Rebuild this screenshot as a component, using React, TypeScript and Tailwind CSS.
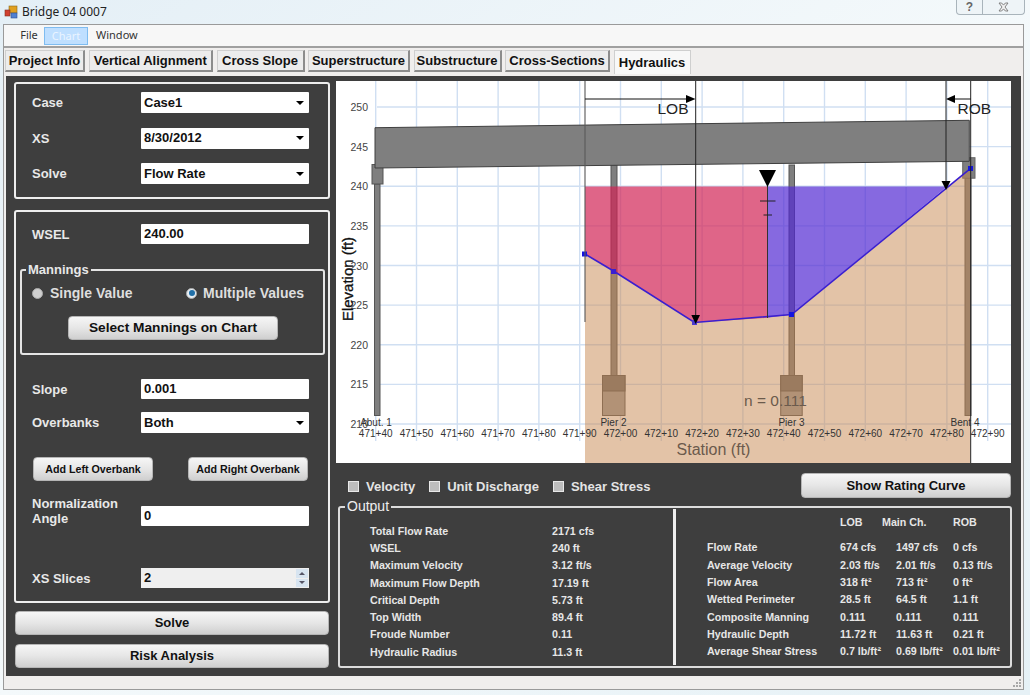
import React from "react";

const xTicks = ["471+40","471+50","471+60","471+70","471+80","471+90","472+00","472+10","472+20","472+30","472+40","472+50","472+60","472+70","472+80","472+90"];
const yTicks = [250,245,240,235,230,225,220,215,210];
const gx = (i: number) => 375.7 + 40.8 * i;
const gy = (i: number) => 107 + 39.63 * i;
const ground = "585,254 613.5,271 694.5,322.5 791.7,314.5 970.3,168.7";

function Footing({ x, w }: { x: number; w: number }) {
  return (
    <>
      <rect x={x} y={375.5} width={w} height={40} fill="#9c9c9c" stroke="#555" />
      <rect x={x} y={375.5} width={w} height={15.5} fill="#6e6e6e" stroke="#555" />
    </>
  );
}

function Chart() {
  const font = "'Liberation Sans', Arial, sans-serif";
  return (
    <svg viewBox="336 81 675 382" className="block w-[675px] h-[382px] bg-white" style={{ fontFamily: font }}>
      {xTicks.map((_, i) => (
        <line key={i} x1={gx(i)} x2={gx(i)} y1={81} y2={441} stroke="#d0dff2" strokeWidth={1.4} />
      ))}
      {yTicks.map((_, i) => (
        <line key={i} x1={377} x2={1011} y1={gy(i)} y2={gy(i)} stroke="#d0dff2" strokeWidth={1.4} />
      ))}
      {/* Abutment 1 */}
      <rect x={374.5} y={184} width={5.5} height={231.5} fill="#7f7f7f" stroke="#555" />
      <rect x={372} y={164.5} width={11} height={19.5} fill="#7f7f7f" stroke="#555" />
      {/* Pier 2 */}
      <rect x={611} y={165} width={6} height={210.5} fill="#7f7f7f" stroke="#555" />
      <Footing x={602.5} w={22.5} />
      {/* Pier 3 */}
      <rect x={789} y={165} width={5.5} height={210.5} fill="#7f7f7f" stroke="#555" />
      <Footing x={780.7} w={21.5} />
      {/* Bent 4 */}
      <rect x={965} y={178} width={6} height={237.5} fill="#7f7f7f" stroke="#555" />
      <rect x={962.7} y={157.7} width={12.3} height={20.5} fill="#7f7f7f" stroke="#666" />
      {/* Ground and water */}
      <polygon points={`585,463 ${ground} 970.3,463`} fill="#c88850" fillOpacity={0.5} />
      <polygon points="585,186.5 767.5,186.5 767.5,317.8 694.5,322.5 613.5,271 585,254" fill="#d12455" fillOpacity={0.7} />
      <polygon points="767.5,186.5 947,186.5 791.7,314.5 767.5,317.8" fill="#5229d3" fillOpacity={0.7} />
      {/* Deck */}
      <polygon points="375,127.7 969.3,120.3 969.3,161.3 375,168" fill="#7f7f7f" stroke="#3f3f3f" strokeWidth={1} />
      {/* Ground line */}
      <polyline points={ground} fill="none" stroke="#3a1fd0" strokeWidth={1.6} />
      <rect x={582} y={251.5} width={5} height={5} fill="#1414e0" />
      <rect x={611} y={269} width={5} height={5} fill="#3a1fd0" />
      <rect x={692} y={320} width={5} height={5} fill="#4a3ad0" />
      <rect x={789} y={312} width={5} height={5} fill="#1414e0" />
      <rect x={968} y={166} width={5} height={5} fill="#1414e0" />
      {/* LOB / ROB markers */}
      <line x1={585} x2={585} y1={81} y2={322} stroke="#5a5a5a" strokeOpacity={0.7} strokeWidth={1.6} />
      <line x1={585} x2={690} y1={99} y2={99} stroke="#111" strokeWidth={1} />
      <polygon points="695.5,99 686,95 686,103" fill="#000" />
      <line x1={695.7} x2={695.7} y1={81} y2={316} stroke="#222" strokeWidth={1} />
      <polygon points="695.7,324 691.3,315 700,315" fill="#000" />
      <line x1={970.7} x2={970.7} y1={81} y2={463} stroke="#222" strokeWidth={1} />
      <line x1={951} x2={970.7} y1={99} y2={99} stroke="#111" strokeWidth={1} />
      <polygon points="946,99 955,95 955,103" fill="#000" />
      <line x1={946} x2={946} y1={81} y2={182} stroke="#222" strokeWidth={1} />
      <polygon points="946,190 941.5,181 950.5,181" fill="#000" />
      <text x={657.5} y={114} fontSize={15.5} fill="#222">LOB</text>
      <text x={957.5} y={114} fontSize={15.5} fill="#222">ROB</text>
      {/* Water surface symbol */}
      <line x1={767.5} x2={767.5} y1={186} y2={318} stroke="#333" strokeWidth={1} />
      <polygon points="759,170 776,170 767.5,187" fill="#000" />
      <line x1={760} x2={775.5} y1={201} y2={201} stroke="#222" strokeWidth={1} />
      <line x1={763.5} x2={772} y1={215} y2={215} stroke="#222" strokeWidth={1} />
      {/* Labels */}
      {yTicks.map((t, i) => (
        <text key={t} x={368} y={gy(i) + 4} fontSize={10.5} fill="#444" textAnchor="end">{t}</text>
      ))}
      {xTicks.map((t, i) => (
        <text key={t} x={gx(i)} y={436.5} fontSize={10} fill="#333" textAnchor="middle">{t}</text>
      ))}
      <text x={376} y={426} fontSize={10} fill="#333" textAnchor="middle">Abut. 1</text>
      <text x={613.5} y={426} fontSize={10} fill="#333" textAnchor="middle">Pier 2</text>
      <text x={791.5} y={426} fontSize={10} fill="#333" textAnchor="middle">Pier 3</text>
      <text x={965} y={426} fontSize={10} fill="#333" textAnchor="middle">Bent 4</text>
      <text x={744} y={406} fontSize={15.5} fill="#6b5a4c">n = 0.111</text>
      <text x={713.5} y={455} fontSize={16} fill="#6b5a4c" textAnchor="middle">Station (ft)</text>
      <text transform="translate(352.5 279) rotate(-90)" fontSize={15} fill="#111" stroke="#111" strokeWidth={0.3} textAnchor="middle">Elevation (ft)</text>
    </svg>
  );
}

function Btn({ children, className }: { children: React.ReactNode; className: string }) {
  return (
    <div className={"flex items-center justify-center rounded-sm border border-[#b5b5b5] bg-gradient-to-b from-[#f6f6f6] via-[#e6e6e6] to-[#cfcfcf] font-bold text-[#111] " + className}>
      {children}
    </div>
  );
}

function Caret() {
  return <span className="w-0 h-0 border-x-[4px] border-x-transparent border-t-[4px] border-t-black" />;
}

function Field({ children, caret, className }: { children: React.ReactNode; caret?: boolean; className?: string }) {
  return (
    <div className={"flex items-center justify-between w-[168px] bg-white rounded-[1px] pl-[3px] pr-[5px] font-bold text-[13px] text-[#111] " + (className ?? "h-[21px]")}>
      <span>{children}</span>
      {caret && <Caret />}
    </div>
  );
}

function Row({ label, children, className }: { label: React.ReactNode; children: React.ReactNode; className?: string }) {
  return (
    <div className={"flex items-center " + (className ?? "")}>
      <div className="w-[109px] font-bold text-[13px] text-[#e8e8e8] leading-[15px]">{label}</div>
      {children}
    </div>
  );
}

function Radio({ on }: { on?: boolean }) {
  return (
    <span className={"w-[11px] h-[11px] rounded-full border border-[#aaa] flex items-center justify-center " + (on ? "bg-[#e6eef4]" : "bg-[#cfcfcf]")}>
      {on && <span className="w-[6px] h-[6px] rounded-full bg-[#1f6fa8]" />}
    </span>
  );
}

function Check({ label }: { label: string }) {
  return (
    <div className="flex items-center gap-[7px] font-bold text-[13px] text-[#e4e4e4]">
      <span className="w-[11px] h-[11px] bg-[#bdbdbd] border border-[#e8e8e8]" />
      <span>{label}</span>
    </div>
  );
}

const outL: [string, string][] = [
  ["Total Flow Rate", "2171 cfs"],
  ["WSEL", "240 ft"],
  ["Maximum Velocity", "3.12 ft/s"],
  ["Maximum Flow Depth", "17.19 ft"],
  ["Critical Depth", "5.73 ft"],
  ["Top Width", "89.4 ft"],
  ["Froude Number", "0.11"],
  ["Hydraulic Radius", "11.3 ft"],
];
const outR: string[][] = [
  ["Flow Rate", "674 cfs", "1497 cfs", "0 cfs"],
  ["Average Velocity", "2.03 ft/s", "2.01 ft/s", "0.13 ft/s"],
  ["Flow Area", "318 ft²", "713 ft²", "0 ft²"],
  ["Wetted Perimeter", "28.5 ft", "64.5 ft", "1.1 ft"],
  ["Composite Manning", "0.111", "0.111", "0.111"],
  ["Hydraulic Depth", "11.72 ft", "11.63 ft", "0.21 ft"],
  ["Average Shear Stress", "0.7 lb/ft²", "0.69 lb/ft²", "0.01 lb/ft²"],
];

const tabs: [string, string][] = [
  ["Project Info", "w-[80px]"],
  ["Vertical Alignment", "w-[124.5px]"],
  ["Cross Slope", "w-[88px]"],
  ["Superstructure", "w-[102px]"],
  ["Substructure", "w-[88px]"],
  ["Cross-Sections", "w-[105px]"],
];

export default function App() {
  return (
    <div className="w-[1030px] h-[695px] overflow-hidden relative bg-gradient-to-br from-[#e4eff6] via-[#f4f9fb] to-[#e6f1f6] text-[#111]" style={{ fontFamily: "'Liberation Sans', Arial, sans-serif" }}>
      {/* Title bar */}
      <div className="h-[24px] flex items-center pl-[4px]">
        <svg width="14" height="14" viewBox="0 0 14 14" className="mr-[4px]">
          <rect x="5" y="1" width="8" height="7" fill="#e0a020" stroke="#8a6a20" strokeWidth="0.6" />
          <rect x="1" y="5" width="5" height="6" fill="#d04030" stroke="#803020" strokeWidth="0.6" />
          <rect x="7" y="8" width="6" height="5" fill="#5080d0" stroke="#305090" strokeWidth="0.6" />
        </svg>
        <span className="text-[12px] text-[#222]" style={{ fontFamily: "'Noto Sans', sans-serif" }}>Bridge 04 0007</span>
      </div>
      {/* Caption buttons */}
      <div className="absolute right-[5px] top-0 w-[69px] h-[15px] flex rounded-b-[4px] border border-t-0 border-[#a9b4bb] bg-[#eef4f7]">
        <span className="w-[26px] border-r border-[#a9b4bb] flex items-center justify-center text-[12px] font-bold text-[#666]">?</span>
        <span className="flex-1 flex items-center justify-center">
          <svg width="11" height="10" viewBox="0 0 11 10">
            <path d="M1 1h2.6l1.9 2.1L7.4 1H10L7 5l3 4H7.4L5.5 6.9 3.6 9H1l3-4z" fill="#f2f2f2" stroke="#777" strokeWidth="0.9" />
          </svg>
        </span>
      </div>
      {/* Client */}
      <div className="relative mx-[3px] w-[1021px] h-[666px] border border-[#9a9a9a] bg-[#f0eeed] flex flex-col">
        {/* Menu */}
        <div className="h-[23px] bg-[#f7f7f7] border-b-2 border-[#a0a0a0] flex items-center pl-[10px] text-[11px] shrink-0" style={{ fontFamily: "'Noto Sans', sans-serif" }}>
          <span className="w-[30px] text-center text-[#333]">File</span>
          <span className="w-[44px] h-[18px] leading-[16px] text-center border border-[#7fbcf0] bg-[#bfdfff] text-[#eaf4ff]">Chart</span>
          <span className="ml-[8px] text-[#333]">Window</span>
        </div>
        {/* Tabs */}
        <div className="flex items-start gap-[3.5px] pl-[1px] pt-[2px] h-[28px] shrink-0 font-bold text-[13px]">
          {tabs.map(([t, w]) => (
            <div key={t} className={"h-[22px] flex items-center justify-center bg-[#ececec] border-r-2 border-b-2 border-[#8c8c8c] border-t border-l border-t-[#cfcfcf] border-l-[#cfcfcf] text-[#111] " + w}>{t}</div>
          ))}
          <div className="w-[77px] h-[24px] flex items-center justify-center bg-[#f8f8f8] border-t border-x border-[#cfcfcf] text-[#111]">Hydraulics</div>
        </div>
        {/* Dark panel */}
        <div className="ml-[2px] w-[1015px] h-[600px] bg-[#3e3e3e] flex pl-[8px] pt-[6px] gap-[6px] shrink-0">
          {/* Left column */}
          <div className="w-[316px] flex flex-col">
            <div className="h-[117px] border-2 border-[#eeeeee] rounded-[3px] pl-[16px] pt-[8px] flex flex-col gap-[14.5px]">
              <Row label="Case"><Field caret>Case1</Field></Row>
              <Row label="XS"><Field caret>8/30/2012</Field></Row>
              <Row label="Solve"><Field caret>Flow Rate</Field></Row>
            </div>
            <div className="mt-[11px] h-[393px] border-2 border-[#eeeeee] rounded-[3px] pl-[16px] pt-[12px] flex flex-col">
              <Row label="WSEL"><Field className="h-[20px]">240.00</Field></Row>
              <div className="relative -ml-[12px] mt-[25px] w-[305px] h-[86px] border-2 border-[#e4e4e4] rounded-[3px] shrink-0">
                <span className="absolute -top-[9px] left-[4px] px-[2px] bg-[#3e3e3e] font-bold text-[13px] leading-[15px] text-[#e8e8e8]">Mannings</span>
                <div className="flex items-center mt-[14px] pl-[10px] font-bold text-[14px] leading-[16px] text-[#dedede]">
                  <Radio /><span className="ml-[7px] w-[136px]">Single Value</span>
                  <span><Radio on /></span><span className="ml-[6px]">Multiple Values</span>
                </div>
                <Btn className="ml-[46px] mt-[15px] w-[210px] h-[24px] text-[13.7px]">Select Mannings on Chart</Btn>
              </div>
              <Row label="Slope" className="mt-[24px]"><Field className="h-[20px]">0.001</Field></Row>
              <Row label="Overbanks" className="mt-[13px]"><Field caret>Both</Field></Row>
              <div className="flex mt-[24px] pl-[1px] gap-[35px]">
                <Btn className="w-[120px] h-[24px] text-[10.7px]">Add Left Overbank</Btn>
                <Btn className="w-[120px] h-[24px] text-[10.7px]">Add Right Overbank</Btn>
              </div>
              <Row label={<>Normalization<br />Angle</>} className="mt-[15px] !items-start"><Field className="h-[20px] mt-[10px]">0</Field></Row>
              <Row label="XS Slices" className="mt-[42px]">
                <div className="relative flex items-center w-[168px] h-[20px] bg-[#efefef] pl-[3px] font-bold text-[13px]">
                  2
                  <div className="absolute right-[1px] top-[1px] w-[12px] h-[18px] flex flex-col gap-[1px]">
                    <span className="flex-1 bg-[#d7e4f0] flex items-center justify-center"><span className="w-0 h-0 border-x-[3px] border-x-transparent border-b-[3px] border-b-[#556]" /></span>
                    <span className="flex-1 bg-[#d7e4f0] flex items-center justify-center"><span className="w-0 h-0 border-x-[3px] border-x-transparent border-t-[3px] border-t-[#556]" /></span>
                  </div>
                </div>
              </Row>
            </div>
            <Btn className="mt-[8px] ml-[1px] w-[314px] h-[24px] text-[13px]">Solve</Btn>
            <Btn className="mt-[9px] ml-[1px] w-[314px] h-[24px] text-[13px]">Risk Analysis</Btn>
          </div>
          {/* Right column */}
          <div className="w-[676px] flex flex-col -mt-[1px]">
            <Chart />
            <div className="h-[43px] flex items-start shrink-0">
              <div className="flex gap-[14px] pl-[12px] pt-[14px]">
                <Check label="Velocity" />
                <Check label="Unit Discharge" />
                <Check label="Shear Stress" />
              </div>
              <Btn className="ml-auto mr-[1px] mt-[10px] w-[210px] h-[25px] text-[13px]">Show Rating Curve</Btn>
            </div>
            <div className="relative h-[162px] ml-[2px] w-[674px] border-2 border-[#dcdcdc] rounded-[3px] flex font-bold text-[10.7px] text-[#e6e6e6] shrink-0">
              <span className="absolute -top-[9px] left-[5px] px-[2px] bg-[#3e3e3e] text-[14px] font-normal leading-[15px] text-[#eeeeee]">Output</span>
              <div className="w-[336px] my-[1px] pl-[30px] pt-[13px] border-r-[3px] border-[#eeeeee]">
                {outL.map(([a, b]) => (
                  <div key={a} className="flex h-[17.3px] items-center">
                    <span className="w-[182px]">{a}</span><span>{b}</span>
                  </div>
                ))}
              </div>
              <div className="pl-[31px] pt-[5px]">
                <div className="flex h-[17.3px] items-center">
                  <span className="w-[133px]" /><span className="w-[42px]">LOB</span><span className="w-[71px]">Main Ch.</span><span>ROB</span>
                </div>
                <div className="h-[8.4px]" />
                {outR.map(([a, b, c, d]) => (
                  <div key={a} className="flex h-[17.3px] items-center whitespace-nowrap">
                    <span className="w-[133px]">{a}</span><span className="w-[56px]">{b}</span><span className="w-[57px]">{c}</span><span>{d}</span>
                  </div>
                ))}
              </div>
            </div>
          </div>
        </div>
        {/* Resize grip */}
        <svg width="9" height="9" viewBox="0 0 9 9" className="absolute right-[1px] bottom-[1px]">
          <g fill="#a8a8a8">
            <rect x="6" y="0" width="2" height="2" />
            <rect x="3" y="3" width="2" height="2" />
            <rect x="6" y="3" width="2" height="2" />
            <rect x="0" y="6" width="2" height="2" />
            <rect x="3" y="6" width="2" height="2" />
            <rect x="6" y="6" width="2" height="2" />
          </g>
        </svg>
      </div>
    </div>
  );
}
